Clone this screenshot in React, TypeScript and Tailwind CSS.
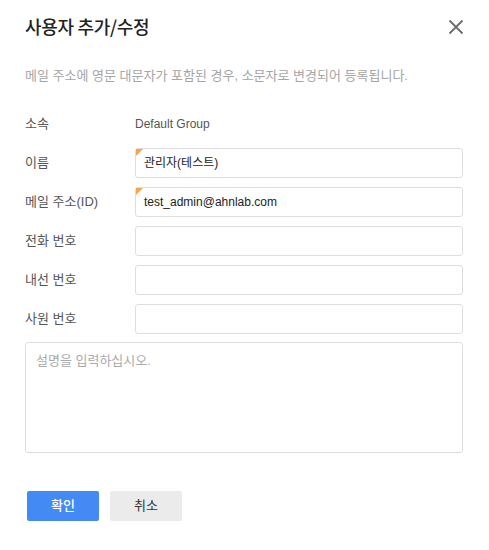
import React from "react";

const Field = ({ label, value, required }: { label: string; value?: string; required?: boolean }) => (
  <div className="flex items-center h-[30px]">
    <div className="w-[110px] shrink-0 text-[13px] text-[#555]">{label}</div>
    <div className="relative flex-1 h-[30px] border border-[#dedede] rounded-[3px] bg-white flex items-center pl-[8px] text-[12px] text-[#222]">
      {required && (
        <div className="absolute left-0 top-0 w-0 h-0 border-t-[7px] border-r-[7px] border-t-[#f6a54b] border-r-transparent" />
      )}
      {value}
    </div>
  </div>
);

export default function App() {
  return (
    <div className="w-[489px] h-[550px] bg-white px-[25px] pr-[26px] font-['Liberation_Sans','Noto_Sans_CJK_KR',sans-serif] relative">
      <div className="flex items-center justify-between pt-[13px] h-[40px]">
        <div className="text-[18px] font-medium text-[#222] tracking-[-0.3px] font-['Noto_Sans_CJK_KR',sans-serif]">사용자 추가/수정</div>
        <svg width="16" height="16" viewBox="0 0 16 16" className="mr-[-1px]">
          <path d="M1.5 1.5 L14.5 14.5 M14.5 1.5 L1.5 14.5" stroke="#6b6b6b" strokeWidth="1.8" fill="none" />
        </svg>
      </div>
      <div className="mt-[27px] text-[13px] text-[#a5a5a5] leading-[18px]">
        메일 주소에 영문 대문자가 포함된 경우, 소문자로 변경되어 등록됩니다.
      </div>
      <div className="mt-[24px] flex flex-col gap-[9px]">
        <div className="flex items-center h-[30px]">
          <div className="w-[110px] shrink-0 text-[13px] text-[#555]">소속</div>
          <div className="text-[12px] text-[#555]">Default Group</div>
        </div>
        <Field label="이름" value="관리자(테스트)" required />
        <Field label="메일 주소(ID)" value="test_admin@ahnlab.com" required />
        <Field label="전화 번호" />
        <Field label="내선 번호" />
        <Field label="사원 번호" />
      </div>
      <div className="mt-[8px] h-[111px] border border-[#dedede] rounded-[3px] px-[10px] pt-[8px] text-[13px] text-[#aaa]">
        설명을 입력하십시오.
      </div>
      <div className="mt-[38px] flex gap-[11px] pl-[2px]">
        <button className="w-[72px] h-[30px] rounded-[2px] bg-[#448af5] text-white text-[13px] font-medium">확인</button>
        <button className="w-[72px] h-[30px] rounded-[2px] bg-[#ebebeb] text-[#333] text-[13px]">취소</button>
      </div>
    </div>
  );
}
